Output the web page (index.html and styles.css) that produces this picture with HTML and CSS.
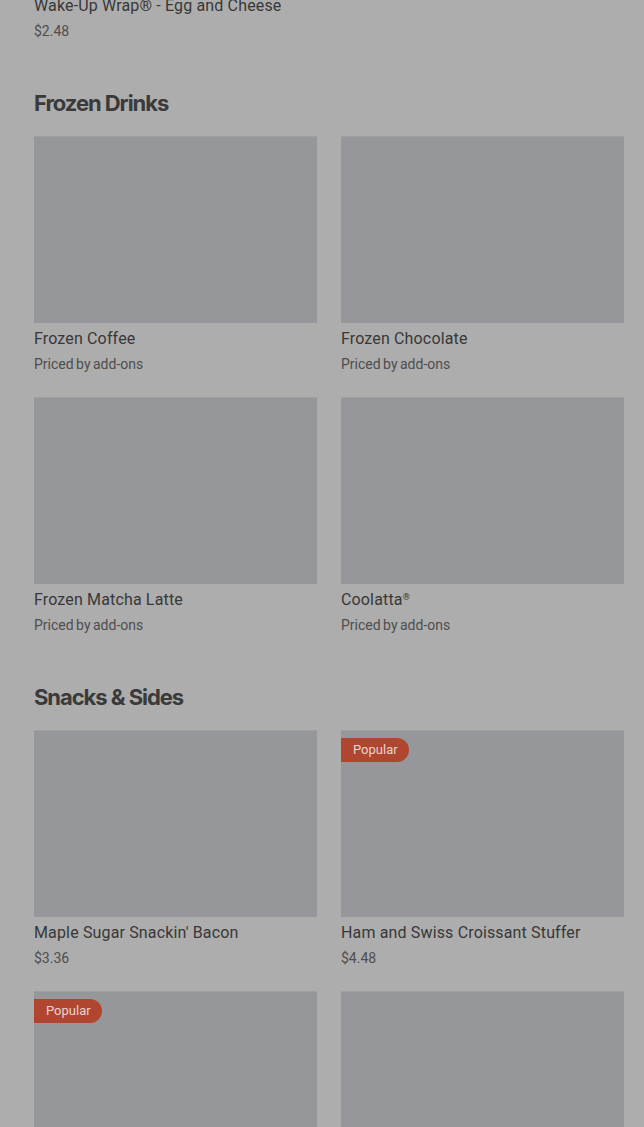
FILE: index.html
```html
<!DOCTYPE html>
<html>
  <head>
    <title>Menu</title>
    <link rel="stylesheet" href="styles.css">
  </head>
  <body>
    <main class="menu">
      <section class="menu-section menu-section--cut">
        <ul class="item-grid">
          <li class="item">
            <div class="item__image"></div>
            <h3 class="item__name">Wake-Up Wrap® - Egg and Cheese</h3>
            <p class="item__price">$2.48</p>
          </li>
        </ul>
      </section>

      <section class="menu-section">
        <h2 class="menu-section__title">Frozen Drinks</h2>
        <ul class="item-grid">
          <li class="item">
            <div class="item__image"></div>
            <h3 class="item__name">Frozen Coffee</h3>
            <p class="item__price">Priced by add-ons</p>
          </li>
          <li class="item">
            <div class="item__image"></div>
            <h3 class="item__name">Frozen Chocolate</h3>
            <p class="item__price">Priced by add-ons</p>
          </li>
          <li class="item">
            <div class="item__image"></div>
            <h3 class="item__name">Frozen Matcha Latte</h3>
            <p class="item__price">Priced by add-ons</p>
          </li>
          <li class="item">
            <div class="item__image"></div>
            <h3 class="item__name">Coolatta<sup>®</sup></h3>
            <p class="item__price">Priced by add-ons</p>
          </li>
        </ul>
      </section>

      <section class="menu-section">
        <h2 class="menu-section__title">Snacks &amp; Sides</h2>
        <ul class="item-grid">
          <li class="item">
            <div class="item__image"></div>
            <h3 class="item__name">Maple Sugar Snackin' Bacon</h3>
            <p class="item__price">$3.36</p>
          </li>
          <li class="item">
            <div class="item__image"><span class="badge">Popular</span></div>
            <h3 class="item__name">Ham and Swiss Croissant Stuffer</h3>
            <p class="item__price">$4.48</p>
          </li>
          <li class="item">
            <div class="item__image"><span class="badge">Popular</span></div>
          </li>
          <li class="item">
            <div class="item__image"></div>
          </li>
        </ul>
      </section>
    </main>
  </body>
</html>
```

FILE: styles.css
```css
html, body { margin: 0; padding: 0; background: #adadad; overflow: hidden; }
body { font-family: Roboto, "Liberation Sans", Arial, sans-serif; color: #3b3b3b; }

.menu {
  padding: 0 20px 0 34px;
  display: flex;
  flex-flow: column nowrap;
  gap: 48px;
}

.menu-section--cut {
  margin-top: -197px;
}

.menu-section__title {
  margin: 0 0 19px;
  font-family: Inter, "Liberation Sans", sans-serif;
  font-size: 22px;
  line-height: 28px;
  font-weight: 700;
  letter-spacing: -1.05px;
  color: #3a3a3a;
}

.item-grid {
  list-style: none;
  margin: 0;
  padding: 0;
  display: grid;
  grid-template-columns: 283px 283px;
  column-gap: 24px;
  row-gap: 23px;
}

.item__image {
  position: relative;
  height: 187px;
  background: #95979a;
  box-shadow: inset 0 1px 0 rgba(255, 255, 255, 0.08);
}

.item__name {
  margin: 4px 0 0;
  font-size: 16px;
  line-height: 24px;
  font-weight: 400;
  letter-spacing: 0.15px;
  color: #383838;
}
.item__name sup { font-size: 9px; vertical-align: 5px; line-height: 0; }

.item__price {
  margin: 3px 0 0;
  font-size: 14px;
  line-height: 20px;
  color: #4e4e4e;
  word-spacing: -1px;
}

.badge {
  position: absolute;
  top: 8px;
  left: 0;
  height: 24px;
  line-height: 24px;
  padding: 0 11px 0 12px;
  border-radius: 0 12px 12px 0;
  background: #b0462f;
  color: #e9d3ce;
  font-size: 13px;
}
```
